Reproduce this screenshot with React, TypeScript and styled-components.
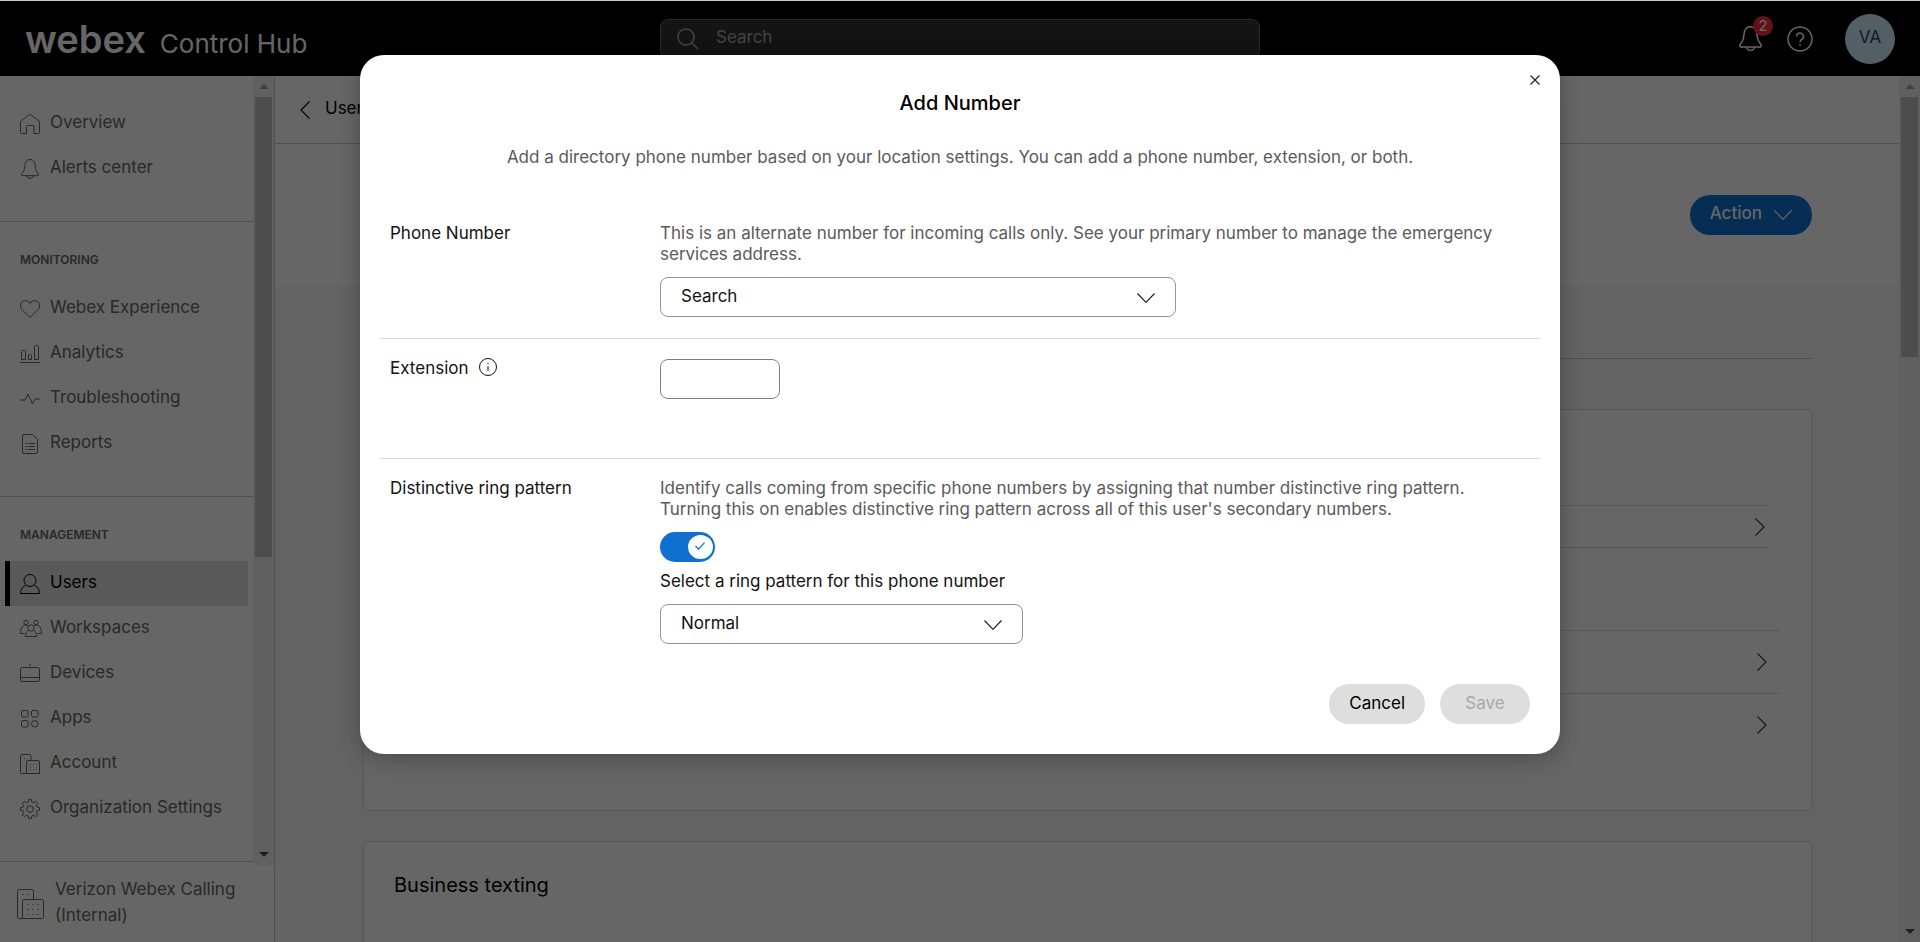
import React from "react";
import styled, { createGlobalStyle, css } from "styled-components";

const GlobalStyle = createGlobalStyle`
  *, *::before, *::after { box-sizing: border-box; }
  body {
    margin: 0;
    color: #121212;
    background: #fff;
    font-family: Inter, "Liberation Sans", sans-serif;
    font-size: 17px;
    line-height: 21px;
  }
  h1, h2, p { margin: 0; padding: 0; font-weight: 400; }
  button, input, select { font: inherit; color: inherit; }
  svg { display: block; fill: none; stroke: currentColor; flex: none; }
`;

/* ---------- Shell ---------- */

const Page = styled.div`
  height: 100vh;
  display: flex;
  flex-direction: column;
  overflow: hidden;
  border-top: 1px solid #c9cccb;
`;

const Shell = styled.div`
  position: relative;
  flex: 1;
  min-height: 0;
  display: flex;
  flex-direction: column;
`;

const TopBar = styled.header`
  height: 75px;
  flex: none;
  display: grid;
  grid-template-columns: 1fr 600px 1fr;
  align-items: center;
  padding: 0 25px;
  background: #000;
  color: #fff;
`;

const Brand = styled.a`
  display: flex;
  align-items: baseline;
  gap: 14px;
  padding-top: 5px;
  color: inherit;
  text-decoration: none;
  line-height: 40px;
`;

const BrandMark = styled.span`
  font-size: 38px;
  font-weight: 600;
`;

const BrandProduct = styled.span`
  font-size: 26px;
  font-weight: 400;
`;

const SearchBox = styled.label`
  height: 40px;
  display: flex;
  align-items: center;
  gap: 17px;
  padding: 0 16px;
  border: 1px solid #666;
  border-radius: 8px;
  background: #343434;
  color: #a8a8a8;
`;

const SearchInput = styled.input`
  flex: 1;
  min-width: 0;
  padding: 0 0 3px;
  border: 0;
  outline: 0;
  background: transparent;
  &::placeholder { color: #a8a8a8; opacity: 1; }
`;

const TopActions = styled.div`
  display: flex;
  align-items: center;
  justify-content: flex-end;
`;

const IconButton = styled.button`
  position: relative;
  display: flex;
  margin: 0 24px 0 0;
  padding: 0;
  border: 0;
  background: none;
`;

const Badge = styled.span`
  position: absolute;
  top: -10px;
  right: -10px;
  width: 20px;
  height: 20px;
  border-radius: 50%;
  background: #ff2a3a;
  color: #fff;
  font-size: 15px;
  line-height: 19px;
  text-align: center;
`;

const Avatar = styled.button`
  width: 50px;
  height: 50px;
  margin-left: 8px;
  padding: 0 0 3px;
  border: 0;
  border-radius: 50%;
  background: #cdf0ff;
  color: #33444d;
`;

const Body = styled.div`
  flex: 1;
  min-height: 0;
  display: flex;
`;

/* ---------- Scroll bars ---------- */

const Rail = styled.div`
  width: 21px;
  flex: none;
  display: flex;
  flex-direction: column;
  align-items: center;
  background: #f1f1f1;
`;

const RailArrow = styled.div<{ $down?: boolean }>`
  height: 21px;
  flex: none;
  display: flex;
  align-items: center;
  &::before {
    content: "";
    border: 5px solid transparent;
    ${(p) =>
      p.$down
        ? css`border-bottom-width: 0; border-top-color: #505050;`
        : css`border-top-width: 0; border-bottom-color: #a3a3a3;`}
  }
`;

const RailTrack = styled.div`
  flex: 1;
  width: 17px;
`;

const RailThumb = styled.div<{ $length: number }>`
  height: ${(p) => p.$length}px;
  max-height: 100%;
  background: #c1c1c1;
`;

const ScrollRail = ({ length }: { length: number }) => (
  <Rail aria-hidden>
    <RailArrow />
    <RailTrack>
      <RailThumb $length={length} />
    </RailTrack>
    <RailArrow $down />
  </Rail>
);

/* ---------- Sidebar ---------- */

const Sidebar = styled.aside`
  width: 275px;
  flex: none;
  display: flex;
  flex-direction: column;
  border-right: 1px solid #c8c8c8;
  color: #666;
`;

const SidebarScroll = styled.div`
  flex: 1;
  min-height: 0;
  display: flex;
`;

const Nav = styled.nav`
  flex: 1;
  overflow: hidden;
`;

const NavGroup = styled.section`
  padding: 25px 5px 30px;
  border-bottom: 1px solid #c8c8c8;
`;

const NavHeading = styled.h2`
  height: 39px;
  padding: 2px 15px 0;
  font-size: 12px;
  font-weight: 600;
`;

const NavLink = styled.a<{ $active?: boolean }>`
  height: 45px;
  display: flex;
  align-items: center;
  gap: 10px;
  padding-left: 10px;
  border-left: 5px solid ${(p) => (p.$active ? "#000" : "transparent")};
  background: ${(p) => (p.$active ? "#dedede" : "none")};
  color: ${(p) => (p.$active ? "#000" : "inherit")};
  text-decoration: none;
`;

const NavGlyph = styled.svg`
  width: 20px;
  height: 20px;
  overflow: visible;
`;

const NavLabel = styled.span`
  padding-bottom: 3px;
`;

const Organization = styled.div`
  height: 77px;
  flex: none;
  display: flex;
  align-items: center;
  gap: 11px;
  padding: 0 17px;
  line-height: 26px;
`;

const OrganizationName = styled.span`
  padding-bottom: 4px;
`;

/* ---------- Page behind the dialog ---------- */

const Main = styled.main`
  flex: 1;
  min-width: 0;
  overflow: hidden;
  background: #f7f7f7;
`;

const Crumb = styled.a`
  height: 68px;
  display: flex;
  align-items: center;
  gap: 15px;
  padding-left: 25px;
  border-bottom: 1px solid #c8c8c8;
  background: #fff;
  color: #000;
  text-decoration: none;
`;

const Profile = styled.div`
  height: 142px;
  display: flex;
  align-items: center;
  justify-content: flex-end;
  padding: 0 87px 0 88px;
  background: #fff;
`;

const ActionButton = styled.button`
  height: 40px;
  display: flex;
  align-items: center;
  gap: 12px;
  padding: 0 20px;
  border: 0;
  border-radius: 20px;
  background: #1170cf;
  color: #fff;
  font-weight: 500;
`;

const Sections = styled.div`
  display: flex;
  flex-direction: column;
  padding: 0 87px 0 88px;
`;

const TabStrip = styled.div`
  height: 73px;
  margin-bottom: 50px;
  border-bottom: 1px solid #c0c0c0;
`;

const Card = styled.section`
  min-height: 402px;
  margin-bottom: 30px;
  padding: 0 31px 0 30px;
  border: 1px solid #dcdcdc;
  border-radius: 5px;
  background: #fff;
`;

const CardTitle = styled.h2`
  padding-top: 31px;
  font-size: 20px;
  line-height: 24px;
  color: #000;
`;

const NumberList = styled.div`
  margin: 95px 10px 82px 0;
  border-bottom: 1px solid #dcdcdc;
`;

const CardRow = styled.a<{ $inner?: boolean }>`
  height: ${(p) => (p.$inner ? 42 : 63)}px;
  display: flex;
  align-items: center;
  justify-content: flex-end;
  padding-right: ${(p) => (p.$inner ? 5 : 13)}px;
  border-top: 1px solid #dcdcdc;
  color: #333;
`;

/* ---------- Dialog ---------- */

const Backdrop = styled.div`
  position: absolute;
  inset: 0;
  display: flex;
  justify-content: center;
  align-items: flex-start;
  padding: 54px 20px 20px;
  background: rgba(0, 0, 0, 0.6);
`;

const Dialog = styled.div`
  position: relative;
  width: 1200px;
  max-width: 100%;
  padding: 36px 20px 30px;
  border-radius: 24px;
  background: #fff;
  box-shadow: 0 8px 24px rgba(0, 0, 0, 0.16), 0 0 16px rgba(0, 0, 0, 0.12);
`;

const CloseButton = styled.button`
  position: absolute;
  top: 18px;
  right: 18px;
  padding: 2px;
  border: 0;
  background: none;
  color: #222;
`;

const DialogTitle = styled.h1`
  font-size: 20px;
  font-weight: 500;
  line-height: 24px;
  text-align: center;
  color: #000;
`;

const Intro = styled.p`
  margin: 32px 0 36px;
  text-align: center;
  color: #5a5a5a;
`;

const Field = styled.section<{ $minHeight?: number }>`
  display: grid;
  grid-template-columns: 270px 1fr;
  min-height: ${(p) => p.$minHeight ?? 0}px;
  padding: 19px 10px 21px;
  & + & { border-top: 1px solid #d8d8d8; }
`;

const FieldLabel = styled.div`
  display: flex;
  align-items: flex-start;
  gap: 10px;
`;

const FieldBody = styled.div`
  display: flex;
  flex-direction: column;
  align-items: flex-start;
`;

const Help = styled.p`
  max-width: 860px;
  margin-bottom: 12px;
  color: #5a5a5a;
`;

const SelectShell = styled.div<{ $width: number }>`
  position: relative;
  width: ${(p) => p.$width}px;
  max-width: 100%;
  svg {
    position: absolute;
    top: 16px;
    right: 21px;
    pointer-events: none;
  }
`;

const Select = styled.select`
  appearance: none;
  width: 100%;
  height: 40px;
  padding: 0 50px 2px 20px;
  border: 1px solid #949494;
  border-radius: 8px;
  background: #fff;
  color: #121212;
`;

const TextInput = styled.input`
  width: 120px;
  height: 40px;
  margin-top: 1px;
  padding: 0 12px;
  border: 1px solid #808080;
  border-radius: 8px;
  background: #fff;
`;

const Toggle = styled.label`
  position: relative;
  height: 30px;
  margin-bottom: 9px;
  color: #1170cf;
  svg {
    position: absolute;
    top: 10px;
    right: 10px;
  }
`;

const ToggleInput = styled.input`
  appearance: none;
  display: block;
  width: 55px;
  height: 30px;
  margin: 0;
  padding: 3px 2px;
  border-radius: 15px;
  background: #1170cf;
  &::before {
    content: "";
    display: block;
    width: 25px;
    height: 24px;
    margin-left: auto;
    border-radius: 50%;
    background: #fff;
  }
`;

const PatternLabel = styled.label`
  margin-bottom: 12px;
`;

const Footer = styled.footer`
  display: flex;
  justify-content: flex-end;
  gap: 15px;
  padding: 19px 10px 0;
`;

const PillButton = styled.button`
  min-width: 90px;
  height: 40px;
  padding: 0 20px 2px;
  border: 0;
  border-radius: 20px;
  background: #dedede;
  color: #000;
  &:disabled { color: #a8a8a8; }
`;

/* ---------- Icons ---------- */

const Chevron = ({ dir }: { dir: "left" | "right" | "down" }) => {
  const size = dir === "down" ? [18, 10] : [10, 18];
  const d = { left: "M9.5.5L1 9l8.5 8.5", right: "M.5.5L9 9l-8.5 8.5", down: "M.5.5L9 9.3 17.5.5" }[dir];
  return (
    <svg width={size[0]} height={size[1]} viewBox={`0 0 ${size[0]} ${size[1]}`} strokeWidth="1.1">
      <path d={d} />
    </svg>
  );
};

const BellShape = () => (
  <path d="M1.500 16.200v-1.400C3.800 12.600 4.600 11 4.800 6.500 5 3 7 .5 10 .5s5 2.500 5.200 6c.2 4.500 1 6.100 3.300 8.300v1.400c0 .3-.2.500-.5.500H2c-.3 0-.5-.2-.5-.5zM6.800 16.800a3.200 2.700 0 0 0 6.400 0" />
);

/* Outline of an eight-toothed cog: two outer and two inner corners per tooth. */
const cogOutline = Array.from({ length: 8 })
  .flatMap((_, tooth) =>
    [
      [-15, 7.2],
      [-8, 9.6],
      [8, 9.6],
      [15, 7.2],
    ].map(([offset, radius]) => {
      const angle = ((tooth * 45 + offset) * Math.PI) / 180;
      return `${(10 + radius * Math.sin(angle)).toFixed(2)},${(10 - radius * Math.cos(angle)).toFixed(2)}`;
    }),
  )
  .join(" ");

const shapes: Record<string, React.ReactNode> = {
  home: <path d="M.5 8.200c0-.5.2-.9.6-1.200L9.200.8a1.300 1.300 0 0 1 1.600 0L18.900 7c.4.300.6.700.6 1.200v10.300a1 1 0 0 1-1 1h-4.500v-7a1 1 0 0 0-1-1H7.500a1 1 0 0 0-1 1v7h-5a1 1 0 0 1-1-1z" />,
  bell: <BellShape />,
  heart: <path d="M10 18.500L2 10.500a5 5 0 0 1-1.500-3.700A5 5 0 0 1 10 4.500a5 5 0 0 1 9.500 2.300c0 1.500-.5 2.700-1.500 3.700z" />,
  chart: <path d="M0 18.500h20M1.500 15.500v-8a1 1 0 0 1 1-1h2a1 1 0 0 1 1 1v8zM8.500 15.500v-4a1 1 0 0 1 1-1h1a1 1 0 0 1 1 1v4zM14.500 15.500v-13a1 1 0 0 1 1-1h2a1 1 0 0 1 1 1v13z" />,
  pulse: <path d="M0 11h5L8 5l4.500 10L15 10h5" />,
  report: <path d="M2.500 2a1.500 1.500 0 0 1 1.500-1.500h8.500l5 5V18a1.500 1.500 0 0 1-1.500 1.500H4A1.500 1.500 0 0 1 2.500 18zM5.500 9.500h2m1 0h6.500M5.500 12.500h2m1 0h6.500M5.500 15.500h2m1 0h6.500" />,
  user: (
    <>
      <circle cx="10" cy="6.500" r="6" />
      <path d="M5.500 11.500C2.500 12.500.5 15.500.5 19.500h19c0-4-2-7-5-8" />
    </>
  ),
  people: (
    <>
      <circle cx="6" cy="3.500" r="2.200" />
      <circle cx="16" cy="3.500" r="2.200" />
      <circle cx="11" cy="9" r="3.200" />
      <path d="M4.500 14.500H.5c0-4.500 1.500-8 4.500-8.500 1.300 0 2.200.3 3 1M17.500 14.500h4c0-4.500-1.500-8-4.500-8.500-1.300 0-2.200.3-3 1M8.500 11.500c-2 1-3 3-3 6h11c0-3-1-5-3-6" />
    </>
  ),
  device: <path d="M2.500 3.500h15a2 2 0 0 1 2 2v10.500a1.500 1.500 0 0 1-1.500 1.500H2A1.500 1.500 0 0 1 .5 16V5.500a2 2 0 0 1 2-2zM.5 13.500h19M9 .8h2" />,
  apps: (
    <>
      <rect x="1.500" y="1.500" width="6.500" height="6.500" rx="1.500" />
      <rect x="11.500" y="1.500" width="6.500" height="6.500" rx="1.500" />
      <rect x="1.500" y="11.500" width="6.500" height="6.500" rx="1.500" />
      <circle cx="14.800" cy="14.800" r="3.300" />
    </>
  ),
  building: (
    <>
      <path d="M6.500 19.500H1.200a.7.7 0 0 1-.7-.7V2A1.500 1.500 0 0 1 2 .5h7.500A1.500 1.500 0 0 1 11 2v4.500" />
      <path d="M6.500 19.500V8A1.500 1.500 0 0 1 8 6.500h10A1.500 1.500 0 0 1 19.500 8v11.500z" />
      <path d="M4 4.500h5M10 10.500h7M10 13h7M10 15.500h7" strokeDasharray="1 2" opacity="0.6" />
    </>
  ),
  gear: (
    <>
      <circle cx="10" cy="10" r="3.300" />
      <polygon points={cogOutline} strokeLinejoin="round" />
    </>
  ),
};

/* ---------- Screen ---------- */

const navigation = [
  { items: [["home", "Overview"], ["bell", "Alerts center"]] },
  {
    heading: "MONITORING",
    items: [["heart", "Webex Experience"], ["chart", "Analytics"], ["pulse", "Troubleshooting"], ["report", "Reports"]],
  },
  {
    heading: "MANAGEMENT",
    items: [
      ["user", "Users"],
      ["people", "Workspaces"],
      ["device", "Devices"],
      ["apps", "Apps"],
      ["building", "Account"],
      ["gear", "Organization Settings"],
    ],
  },
];

export default function App() {
  return (
    <>
      <GlobalStyle />
      <Page>
        <Shell>
          <TopBar>
            <Brand href="#">
              <BrandMark>webex</BrandMark>
              <BrandProduct>Control Hub</BrandProduct>
            </Brand>
            <SearchBox>
              <svg width="22" height="22" viewBox="0 0 22 22" strokeWidth="1.5">
                <circle cx="9" cy="9" r="8" />
                <path d="M15 15l6 6" />
              </svg>
              <SearchInput placeholder="Search" aria-label="Search Control Hub" />
            </SearchBox>
            <TopActions>
              <IconButton aria-label="Notifications">
                <svg width="25" height="25" viewBox="0 0 20 20" strokeWidth="1.2">
                  <BellShape />
                </svg>
                <Badge>2</Badge>
              </IconButton>
              <IconButton aria-label="Help">
                <svg width="26" height="26" viewBox="0 0 26 26" strokeWidth="1.5">
                  <circle cx="13" cy="13" r="12" />
                  <path d="M9.500 10.500a3.500 3.500 0 1 1 5.200 3c-1.200.7-1.700 1.300-1.700 2.700M13 18v1.800" />
                </svg>
              </IconButton>
              <Avatar>VA</Avatar>
            </TopActions>
          </TopBar>

          <Body>
            <Sidebar>
              <SidebarScroll>
                <Nav>
                  {navigation.map((group, i) => (
                    <NavGroup key={i}>
                      {group.heading && <NavHeading>{group.heading}</NavHeading>}
                      {group.items.map(([icon, label]) => (
                        <NavLink key={label} href="#" $active={label === "Users"}>
                          <NavGlyph viewBox="0 0 20 20">{shapes[icon]}</NavGlyph>
                          <NavLabel>{label}</NavLabel>
                        </NavLink>
                      ))}
                    </NavGroup>
                  ))}
                </Nav>
                <ScrollRail length={460} />
              </SidebarScroll>
              <Organization>
                <svg width="27" height="30" viewBox="0 0 27 30">
                  <path d="M5.500 29.500h-4a1 1 0 0 1-1-1V2.500a2 2 0 0 1 2-2h12a2 2 0 0 1 2 2v8" />
                  <path d="M5.500 29.500v-17a2 2 0 0 1 2-2h17a2 2 0 0 1 2 2v16a1 1 0 0 1-1 1z" />
                  <path d="M5 5.500h7M10 15.500h12M10 20.500h12M10 25.500h12" strokeDasharray="2 3" opacity="0.6" />
                </svg>
                <OrganizationName>Verizon Webex Calling (Internal)</OrganizationName>
              </Organization>
            </Sidebar>

            <Main>
              <Crumb href="#">
                <Chevron dir="left" />
                <NavLabel>Users</NavLabel>
              </Crumb>
              <Profile>
                <ActionButton>
                  <NavLabel>Action</NavLabel>
                  <Chevron dir="down" />
                </ActionButton>
              </Profile>
              <Sections>
                <TabStrip />
                <Card>
                  <NumberList>
                    <CardRow href="#" $inner aria-label="Primary number">
                      <Chevron dir="right" />
                    </CardRow>
                  </NumberList>
                  <CardRow href="#" aria-label="Numbers">
                    <Chevron dir="right" />
                  </CardRow>
                  <CardRow href="#" aria-label="Calling details">
                    <Chevron dir="right" />
                  </CardRow>
                </Card>
                <Card>
                  <CardTitle>Business texting</CardTitle>
                </Card>
              </Sections>
            </Main>
            <ScrollRail length={260} />
          </Body>

          <Backdrop>
            <Dialog role="dialog" aria-modal="true" aria-labelledby="dialog-title">
              <CloseButton aria-label="Close">
                <svg width="10" height="10" viewBox="0 0 10 10" strokeWidth="1.2">
                  <path d="M.5.5l9 9M9.500.5l-9 9" />
                </svg>
              </CloseButton>
              <DialogTitle id="dialog-title">Add Number</DialogTitle>
              <Intro>
                Add a directory phone number based on your location settings. You can add a phone number, extension, or
                both.
              </Intro>

              <Field>
                <FieldLabel>
                  <label htmlFor="phone">Phone Number</label>
                </FieldLabel>
                <FieldBody>
                  <Help>
                    This is an alternate number for incoming calls only. See your primary number to manage the emergency
                    services address.
                  </Help>
                  <SelectShell $width={516}>
                    <Select id="phone" defaultValue="">
                      <option value="">Search</option>
                    </Select>
                    <Chevron dir="down" />
                  </SelectShell>
                </FieldBody>
              </Field>

              <Field $minHeight={120}>
                <FieldLabel>
                  <label htmlFor="extension">Extension</label>
                  <svg width="18" height="18" viewBox="0 0 18 18">
                    <circle cx="9" cy="9" r="8.500" />
                    <path d="M9 8v5M9 5v1.200" />
                  </svg>
                </FieldLabel>
                <FieldBody>
                  <TextInput id="extension" />
                </FieldBody>
              </Field>

              <Field>
                <FieldLabel>
                  <label htmlFor="distinctive">Distinctive ring pattern</label>
                </FieldLabel>
                <FieldBody>
                  <Help>
                    Identify calls coming from specific phone numbers by assigning that number distinctive ring pattern.
                    Turning this on enables distinctive ring pattern across all of this user's secondary numbers.
                  </Help>
                  <Toggle>
                    <ToggleInput id="distinctive" type="checkbox" role="switch" defaultChecked />
                    <svg width="10" height="8" viewBox="0 0 10 8" strokeWidth="1.2">
                      <path d="M.5 4l3 3.200L9.500.6" />
                    </svg>
                  </Toggle>
                  <PatternLabel htmlFor="pattern">Select a ring pattern for this phone number</PatternLabel>
                  <SelectShell $width={363}>
                    <Select id="pattern" defaultValue="normal">
                      <option value="normal">Normal</option>
                    </Select>
                    <Chevron dir="down" />
                  </SelectShell>
                </FieldBody>
              </Field>

              <Footer>
                <PillButton>Cancel</PillButton>
                <PillButton disabled>Save</PillButton>
              </Footer>
            </Dialog>
          </Backdrop>
        </Shell>
      </Page>
    </>
  );
}
